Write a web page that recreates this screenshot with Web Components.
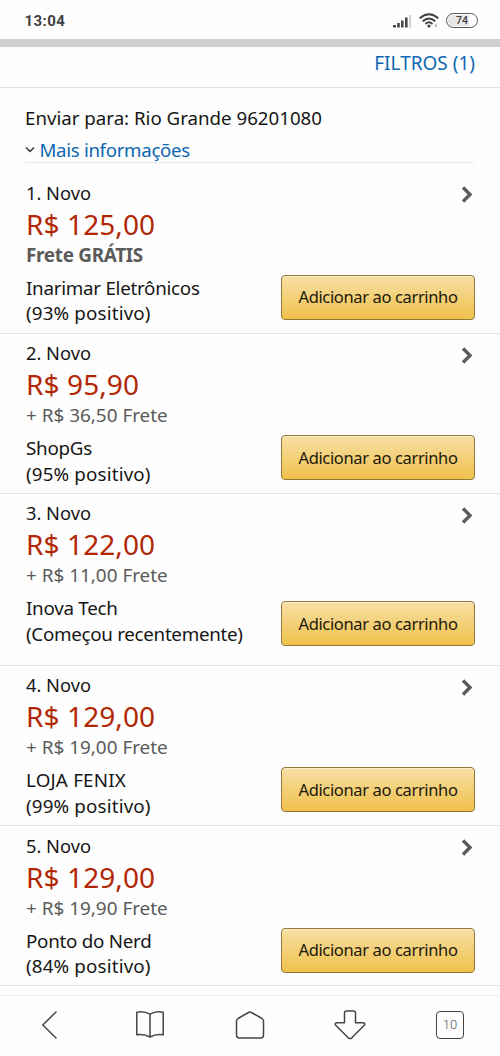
<!DOCTYPE html>
<html lang="pt-BR">
<head>
<meta charset="utf-8">
<meta name="viewport" content="width=device-width, initial-scale=1">
<title>Ofertas</title>
<style>
  body {
    margin: 0;
    background: #fefefe;
    color: #161616;
    font-family: 'Noto Sans', 'Open Sans', sans-serif;
    font-size: 19px;
  }
</style>
</head>
<body>
<offers-app></offers-app>

<script>
/* Phone status bar: clock, signal, wifi and battery level. */
class StatusBar extends HTMLElement {
    constructor() {
        super();
        const shadow = this.attachShadow({ mode: 'open' });
        shadow.innerHTML = `
            <style>
            :host {
                display: flex;
                align-items: center;
                box-sizing: border-box;
                height: 47px;
                padding: 2px 22px 0 24.5px;
                border-bottom: 8px solid #cfcfcf;
                font-family: Roboto, sans-serif;
                color: #404040;
            }
            .clock {
                flex: 1;
                font-size: 15px;
                font-weight: 700;
                letter-spacing: 0.4px;
            }
            svg { display: block; }
            .signal { margin-right: 7px; }
            .wifi { margin-right: 7px; }
            .battery {
                box-sizing: border-box;
                width: 32px;
                height: 15px;
                border: 1.5px solid #555;
                border-radius: 8px;
                background: linear-gradient(90deg, #e6e6e6 74%, #fff 74%);
                box-shadow: inset 0 0 0 1px #fff;
                font-size: 10.5px;
                font-weight: 500;
                line-height: 13px;
                text-align: center;
            }
            </style>
            <span class="clock"><slot></slot></span>
            <svg class="signal" width="19" height="14" viewBox="0 0 19 14">
                <g fill="#484848">
                    <rect x="0" y="11" width="3" height="2.5"/>
                    <rect x="4.2" y="9" width="2.6" height="4.5"/>
                    <rect x="8" y="6.5" width="2.6" height="7"/>
                    <rect x="12" y="3.5" width="2.6" height="10"/>
                </g>
                <rect x="16" y="1" width="2.2" height="12.5" fill="#d4d4d4"/>
            </svg>
            <svg class="wifi" width="20" height="15" viewBox="0 0 20 15">
                <g fill="none" stroke="#404040" stroke-width="1.9">
                    <path d="M.7 5.2Q10-2.8 19.3 5.2"/>
                    <path d="M3.7 8.2Q10 2.6 16.3 8.2"/>
                    <path d="M6.5 11Q10 7.7 13.5 11"/>
                </g>
                <circle cx="10" cy="13" r="1.6" fill="#404040"/>
                <path d="M17.5 10.5v4l-2-2z" fill="#999"/>
            </svg>
            <div class="battery">74</div>
        `;
    }
}
customElements.define('status-bar', StatusBar);

/* Yellow call to action button. */
class CartButton extends HTMLElement {
    constructor() {
        super();
        this.attachShadow({ mode: 'open' }).innerHTML = `
            <style>
            :host { display: block; }
            button {
                display: block;
                box-sizing: border-box;
                width: 194px;
                height: 45px;
                padding: 0;
                border: 1px solid #94763a;
                border-bottom-width: 1.5px;
                border-radius: 4px;
                background: linear-gradient(#f7dfa5, #f0c14b);
                box-shadow: inset 0 1px 0 #fbeecb;
                color: #21190c;
                font: 16.5px/42px 'Noto Sans', sans-serif;
                letter-spacing: -0.36px;
                white-space: nowrap;
            }
            </style>
            <button><slot></slot></button>
        `;
    }
}
customElements.define('cart-button', CartButton);

/* One offer: condition, price, shipping, seller and its button. */
class OfferRow extends HTMLElement {
    constructor() {
        super();
        this.attachShadow({ mode: 'open' }).innerHTML = `
            <style>
            :host {
                display: grid;
                grid-template-columns: 1fr 194px;
                box-sizing: border-box;
                height: 160.3px;
                padding: 7.5px 25px 0 26px;
                border-bottom: 1px solid #e4e4e4;
            }
            :host([tall]) { height: 172px; }
            .info { white-space: nowrap; }
            .title { line-height: 24px; font-size: 18.3px; }
            .price {
                color: #b12704;
                font-size: 28px;
                line-height: 38px;
                letter-spacing: 0.1px;
            }
            .shipping {
                color: #5a5a5a;
                font-size: 18.9px;
                line-height: 24px;
            }
            :host([free]) .shipping { font-weight: 700; letter-spacing: -0.3px; }
            .seller {
                margin-top: 9px;
                line-height: 25.5px;
                font-size: 18.8px;
                letter-spacing: -0.27px;
            }
            slot[name="rating"] { letter-spacing: 0.15px; }
            :host([tall]) slot[name="rating"] { letter-spacing: -0.3px; }
            :host([caps]) slot[name="seller"] { letter-spacing: 0.2px; }
            .side {
                display: flex;
                flex-direction: column;
                align-items: flex-end;
            }
            .side svg { display: block; margin: 4.5px 2px 0 0; }
            cart-button { margin-top: 70.6px; }
            :host([tall]) cart-button { margin-top: 76.5px; }
            </style>
            <div class="info">
                <div class="title"><slot name="title"></slot></div>
                <div class="price"><slot name="price"></slot></div>
                <div class="shipping"><slot name="shipping"></slot></div>
                <div class="seller"><slot name="seller"></slot><br><slot name="rating"></slot></div>
            </div>
            <div class="side">
                <svg width="12" height="19" viewBox="0 0 12 19">
                    <path d="M2 2.5l7 7-7 7" fill="none" stroke="#5c5c5c" stroke-width="3.4"/>
                </svg>
                <cart-button>Adicionar ao carrinho</cart-button>
            </div>
        `;
    }
}
customElements.define('offer-row', OfferRow);

/* Browser toolbar at the bottom of the screen. */
class BottomBar extends HTMLElement {
    constructor() {
        super();
        this.attachShadow({ mode: 'open' }).innerHTML = `
            <style>
            :host {
                display: grid;
                grid-template-columns: repeat(5, 1fr);
                place-items: center;
                box-sizing: border-box;
                height: 61px;
                padding-bottom: 2px;
                border-top: 1px solid #efefef;
            }
            svg {
                display: block;
                fill: none;
                stroke: #444;
                stroke-width: 1.5;
                stroke-linecap: round;
                stroke-linejoin: round;
            }
            .tabs {
                box-sizing: border-box;
                width: 28px;
                height: 28px;
                border: 1.5px solid #444;
                border-radius: 4px;
                color: #555;
                font: 300 13px/25px Roboto, sans-serif;
                text-align: center;
            }
            </style>
            <svg width="32" height="32" viewBox="0 0 32 32"><path d="M22 3L8.8 16 22 29"/></svg>
            <svg width="32" height="32" viewBox="0 0 32 32">
                <path d="M16 5.2Q10 1.6 2.8 3.2V25.8Q10 24.6 16 28 22 24.6 29.2 25.8V3.2Q22 1.6 16 5.2V28"/>
            </svg>
            <svg width="32" height="32" viewBox="0 0 32 32">
                <path d="M14.5 3.5Q16 2.6 17.5 3.5L28 9.5Q29.5 10.5 29.5 12V26Q29.5 29 26.5 29H5.5Q2.5 29 2.5 26V12Q2.5 10.5 4 9.5Z"/>
            </svg>
            <svg width="32" height="32" viewBox="0 0 32 32">
                <path d="M12.5 2H19.5Q21.5 2 21.5 4V13.8H29Q32 14.2 30 16.5L17.8 28.8Q16 30.3 14.2 28.8L2 16.5Q0 14.2 3 13.8H10.5V4Q10.5 2 12.5 2Z"/>
            </svg>
            <div class="tabs">10</div>
        `;
    }
}
customElements.define('bottom-bar', BottomBar);

/* Whole screen. */
class OffersApp extends HTMLElement {
    constructor() {
        super();
        this.attachShadow({ mode: 'open' }).innerHTML = `
            <style>
            :host {
                display: flex;
                flex-direction: column;
                height: 1056px;
                overflow: hidden;
            }
            .filters {
                box-sizing: border-box;
                height: 41px;
                padding-right: 25px;
                border-bottom: 1px solid #e2e2e2;
                color: #0d66b0;
                font-size: 19px;
                line-height: 33px;
                text-align: right;
            }
            .ship {
                box-sizing: border-box;
                height: 75px;
                margin: 0 26px 0 25px;
                padding-top: 14px;
                border-bottom: 1px solid #e8e8e8;
                line-height: 32px;
                font-size: 18.7px;
            }
            .more {
                display: flex;
                align-items: center;
                gap: 4.5px;
                color: #0d66b0;
                letter-spacing: -0.33px;
            }
            main { flex: 1; }
            .offers { padding-top: 10.3px; }
            </style>
            <status-bar>13:04</status-bar>
            <main>
                <div class="filters">FILTROS (1)</div>
                <div class="ship">
                    <div class="to">Enviar para: Rio Grande 96201080</div>
                    <div class="more">
                        <svg width="10" height="8" viewBox="0 0 10 8"><path d="M1 1.5l4 4 4-4" fill="none" stroke="#333" stroke-width="1.5"/></svg>
                        <span>Mais informações</span>
                    </div>
                </div>
                <div class="offers">
                    <offer-row free>
                        <span slot="title">1. Novo</span>
                        <span slot="price">R$ 125,00</span>
                        <span slot="shipping">Frete GRÁTIS</span>
                        <span slot="seller">Inarimar Eletrônicos</span>
                        <span slot="rating">(93% positivo)</span>
                    </offer-row>
                    <offer-row>
                        <span slot="title">2. Novo</span>
                        <span slot="price">R$ 95,90</span>
                        <span slot="shipping">+ R$ 36,50 Frete</span>
                        <span slot="seller">ShopGs</span>
                        <span slot="rating">(95% positivo)</span>
                    </offer-row>
                    <offer-row tall>
                        <span slot="title">3. Novo</span>
                        <span slot="price">R$ 122,00</span>
                        <span slot="shipping">+ R$ 11,00 Frete</span>
                        <span slot="seller">Inova Tech</span>
                        <span slot="rating">(Começou recentemente)</span>
                    </offer-row>
                    <offer-row caps>
                        <span slot="title">4. Novo</span>
                        <span slot="price">R$ 129,00</span>
                        <span slot="shipping">+ R$ 19,00 Frete</span>
                        <span slot="seller">LOJA FENIX</span>
                        <span slot="rating">(99% positivo)</span>
                    </offer-row>
                    <offer-row>
                        <span slot="title">5. Novo</span>
                        <span slot="price">R$ 129,00</span>
                        <span slot="shipping">+ R$ 19,90 Frete</span>
                        <span slot="seller">Ponto do Nerd</span>
                        <span slot="rating">(84% positivo)</span>
                    </offer-row>
                </div>
            </main>
            <bottom-bar></bottom-bar>
        `;
    }
}
customElements.define('offers-app', OffersApp);
</script>
</body>
</html>
